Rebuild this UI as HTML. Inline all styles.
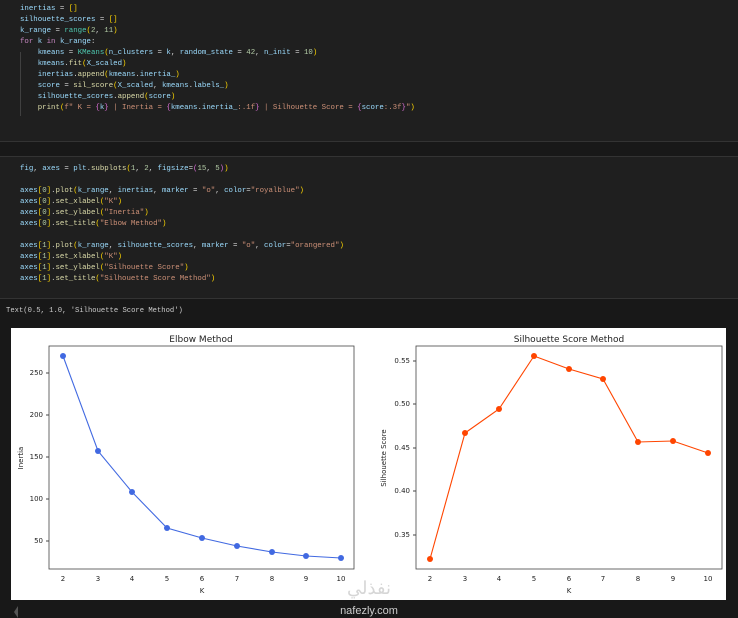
<!DOCTYPE html>
<html><head><meta charset="utf-8"><style>
html,body{margin:0;padding:0;width:738px;height:618px;background:#181818;overflow:hidden}
.cell{position:absolute;left:0;width:738px;background:#1f1f1f}
.code{position:absolute;left:20px;font-family:"Liberation Mono",monospace;font-size:7.4px;line-height:11px;white-space:pre;color:#d4d4d4}
.v{color:#9cdcfe}.f{color:#dcdcaa}.c{color:#4ec9b0}.k{color:#c586c0}.s{color:#ce9178}.n{color:#b5cea8}.y{color:#ffd700}.p{color:#da70d6}.b{color:#179fff}
</style></head><body>
<div class="cell" style="top:0;height:141px;border-bottom:1px solid #333"></div>
<div style="position:absolute;left:20px;top:52px;width:1px;height:64px;background:#404040"></div>
<div class="code" style="top:4px"><span class="v">inertias</span> = <span class="y">[]</span>
<span class="v">silhouette_scores</span> = <span class="y">[]</span>
<span class="v">k_range</span> = <span class="c">range</span><span class="y">(</span><span class="n">2</span>, <span class="n">11</span><span class="y">)</span>
<span class="k">for</span> <span class="v">k</span> <span class="k">in</span> <span class="v">k_range</span>:
    <span class="v">kmeans</span> = <span class="c">KMeans</span><span class="y">(</span><span class="v">n_clusters</span> = <span class="v">k</span>, <span class="v">random_state</span> = <span class="n">42</span>, <span class="v">n_init</span> = <span class="n">10</span><span class="y">)</span>
    <span class="v">kmeans</span>.<span class="f">fit</span><span class="y">(</span><span class="v">X_scaled</span><span class="y">)</span>
    <span class="v">inertias</span>.<span class="f">append</span><span class="y">(</span><span class="v">kmeans</span>.<span class="v">inertia_</span><span class="y">)</span>
    <span class="v">score</span> = <span class="f">sil_score</span><span class="y">(</span><span class="v">X_scaled</span>, <span class="v">kmeans</span>.<span class="v">labels_</span><span class="y">)</span>
    <span class="v">silhouette_scores</span>.<span class="f">append</span><span class="y">(</span><span class="v">score</span><span class="y">)</span>
    <span class="f">print</span><span class="y">(</span><span class="s">f" K = </span><span class="p">{</span><span class="v">k</span><span class="p">}</span><span class="s"> | Inertia = </span><span class="p">{</span><span class="v">kmeans</span>.<span class="v">inertia_</span><span class="s">:.1f</span><span class="p">}</span><span class="s"> | Silhouette Score = </span><span class="p">{</span><span class="v">score</span><span class="s">:.3f</span><span class="p">}</span><span class="s">"</span><span class="y">)</span></div>

<div class="cell" style="top:156px;height:141px;border-top:1px solid #333;border-bottom:1px solid #333"></div>
<div class="code" style="top:164px"><span class="v">fig</span>, <span class="v">axes</span> = <span class="v">plt</span>.<span class="f">subplots</span><span class="y">(</span><span class="n">1</span>, <span class="n">2</span>, <span class="v">figsize</span>=<span class="p">(</span><span class="n">15</span>, <span class="n">5</span><span class="p">)</span><span class="y">)</span>

<span class="v">axes</span><span class="y">[</span><span class="n">0</span><span class="y">]</span>.<span class="f">plot</span><span class="y">(</span><span class="v">k_range</span>, <span class="v">inertias</span>, <span class="v">marker</span> = <span class="s">"o"</span>, <span class="v">color</span>=<span class="s">"royalblue"</span><span class="y">)</span>
<span class="v">axes</span><span class="y">[</span><span class="n">0</span><span class="y">]</span>.<span class="f">set_xlabel</span><span class="y">(</span><span class="s">"K"</span><span class="y">)</span>
<span class="v">axes</span><span class="y">[</span><span class="n">0</span><span class="y">]</span>.<span class="f">set_ylabel</span><span class="y">(</span><span class="s">"Inertia"</span><span class="y">)</span>
<span class="v">axes</span><span class="y">[</span><span class="n">0</span><span class="y">]</span>.<span class="f">set_title</span><span class="y">(</span><span class="s">"Elbow Method"</span><span class="y">)</span>

<span class="v">axes</span><span class="y">[</span><span class="n">1</span><span class="y">]</span>.<span class="f">plot</span><span class="y">(</span><span class="v">k_range</span>, <span class="v">silhouette_scores</span>, <span class="v">marker</span> = <span class="s">"o"</span>, <span class="v">color</span>=<span class="s">"orangered"</span><span class="y">)</span>
<span class="v">axes</span><span class="y">[</span><span class="n">1</span><span class="y">]</span>.<span class="f">set_xlabel</span><span class="y">(</span><span class="s">"K"</span><span class="y">)</span>
<span class="v">axes</span><span class="y">[</span><span class="n">1</span><span class="y">]</span>.<span class="f">set_ylabel</span><span class="y">(</span><span class="s">"Silhouette Score"</span><span class="y">)</span>
<span class="v">axes</span><span class="y">[</span><span class="n">1</span><span class="y">]</span>.<span class="f">set_title</span><span class="y">(</span><span class="s">"Silhouette Score Method"</span><span class="y">)</span></div>

<div class="code" style="top:306px;left:6px;color:#ccc;font-size:7.2px">Text(0.5, 1.0, 'Silhouette Score Method')</div>

<svg style="position:absolute;left:0;top:0" width="738" height="618" font-family="DejaVu Sans, Liberation Sans, sans-serif">
<rect x="11" y="328" width="715" height="272" fill="#fff"/>
<g font-size="7" fill="#222">
<text x="201" y="342" font-size="9" text-anchor="middle">Elbow Method</text>
<rect x="49" y="346" width="305" height="223" fill="none" stroke="#444" stroke-width="0.8"/>
<g text-anchor="end">
<text x="43" y="375">250</text><line x1="46" x2="49" y1="373" y2="373" stroke="#444"/>
<text x="43" y="417">200</text><line x1="46" x2="49" y1="415" y2="415" stroke="#444"/>
<text x="43" y="459">150</text><line x1="46" x2="49" y1="457" y2="457" stroke="#444"/>
<text x="43" y="501">100</text><line x1="46" x2="49" y1="499" y2="499" stroke="#444"/>
<text x="43" y="543">50</text><line x1="46" x2="49" y1="541" y2="541" stroke="#444"/>
</g>
<text transform="translate(23,458) rotate(-90)" text-anchor="middle">Inertia</text>
<g text-anchor="middle">
<text x="63" y="581">2</text><text x="98" y="581">3</text><text x="132" y="581">4</text><text x="167" y="581">5</text><text x="202" y="581">6</text><text x="237" y="581">7</text><text x="272" y="581">8</text><text x="306" y="581">9</text><text x="341" y="581">10</text>
<text x="202" y="593">K</text>
<text x="430" y="581">2</text><text x="465" y="581">3</text><text x="499" y="581">4</text><text x="534" y="581">5</text><text x="569" y="581">6</text><text x="603" y="581">7</text><text x="638" y="581">8</text><text x="673" y="581">9</text><text x="708" y="581">10</text>
<text x="569" y="593">K</text>
</g>
<polyline fill="none" stroke="#4169e1" stroke-width="1.1" points="63,356 98,451 132,492 167,528 202,538 237,546 272,552 306,556 341,558"/>
<g fill="#4169e1"><circle cx="63" cy="356" r="3"/><circle cx="98" cy="451" r="3"/><circle cx="132" cy="492" r="3"/><circle cx="167" cy="528" r="3"/><circle cx="202" cy="538" r="3"/><circle cx="237" cy="546" r="3"/><circle cx="272" cy="552" r="3"/><circle cx="306" cy="556" r="3"/><circle cx="341" cy="558" r="3"/></g>
<text x="569" y="342" font-size="9" text-anchor="middle">Silhouette Score Method</text>
<rect x="416" y="346" width="306" height="223" fill="none" stroke="#444" stroke-width="0.8"/>
<g text-anchor="end">
<text x="410" y="363">0.55</text><line x1="413" x2="416" y1="361" y2="361" stroke="#444"/>
<text x="410" y="406">0.50</text><line x1="413" x2="416" y1="404" y2="404" stroke="#444"/>
<text x="410" y="450">0.45</text><line x1="413" x2="416" y1="448" y2="448" stroke="#444"/>
<text x="410" y="493">0.40</text><line x1="413" x2="416" y1="491" y2="491" stroke="#444"/>
<text x="410" y="537">0.35</text><line x1="413" x2="416" y1="535" y2="535" stroke="#444"/>
</g>
<text transform="translate(386,458) rotate(-90)" text-anchor="middle">Silhouette Score</text>
<polyline fill="none" stroke="#ff4500" stroke-width="1.1" points="430,559 465,433 499,409 534,356 569,369 603,379 638,442 673,441 708,453"/>
<g fill="#ff4500"><circle cx="430" cy="559" r="3"/><circle cx="465" cy="433" r="3"/><circle cx="499" cy="409" r="3"/><circle cx="534" cy="356" r="3"/><circle cx="569" cy="369" r="3"/><circle cx="603" cy="379" r="3"/><circle cx="638" cy="442" r="3"/><circle cx="673" cy="441" r="3"/><circle cx="708" cy="453" r="3"/></g>
</g>
<text x="369" y="614" font-size="11" fill="#ccc" text-anchor="middle" font-family="Liberation Sans, sans-serif">nafezly.com</text>
<text x="369" y="594" font-size="18" fill="#bbb" opacity="0.6" text-anchor="middle" font-family="Noto Sans CJK SC, sans-serif">نفذلي</text>
<polygon points="14,612 18,606 18,618" fill="#555"/>
</svg>
</body></html>
